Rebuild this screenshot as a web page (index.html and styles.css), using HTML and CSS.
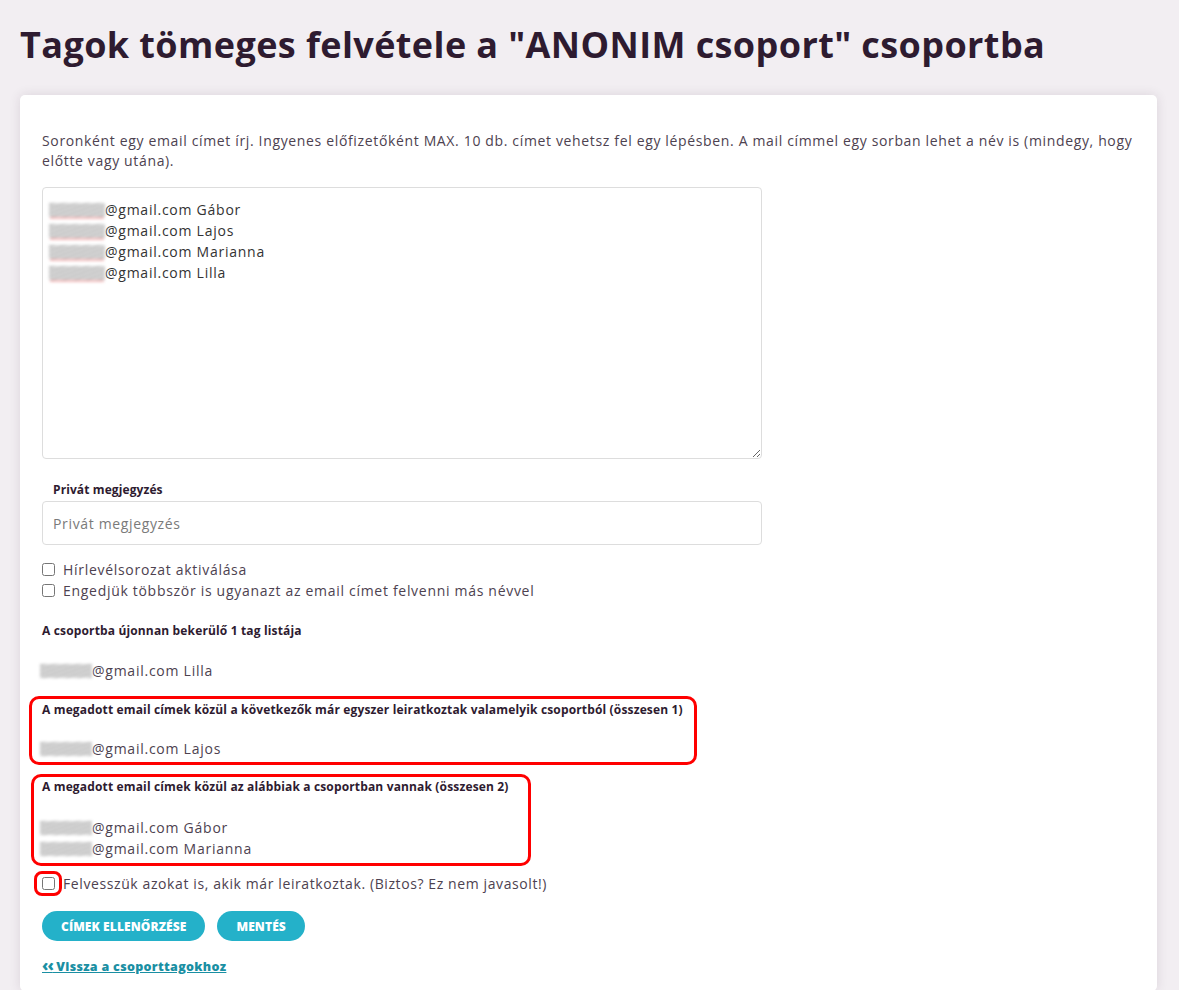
FILE: index.html
```html
<!DOCTYPE html>
<html lang="hu">
<head>
    <meta charset="UTF-8">
    <meta name="viewport" content="width=device-width, initial-scale=1.0">
    <title>Tagok tömeges felvétele</title>
    <link rel="stylesheet" href="styles.css">
</head>
<body>
    <h1>Tagok tömeges felvétele a "ANONIM csoport" csoportba</h1>

    <div class="card">
        <p class="intro">Soronként egy email címet írj. Ingyenes előfizetőként MAX. 10 db. címet vehetsz fel egy lépésben. A mail címmel egy sorban lehet a név is (mindegy, hogy előtte vagy utána).</p>

        <div class="emails">
            <div><span class="blur spell"></span>@gmail.com Gábor</div>
            <div><span class="blur spell"></span>@gmail.com Lajos</div>
            <div><span class="blur spell"></span>@gmail.com Marianna</div>
            <div><span class="blur spell"></span>@gmail.com Lilla</div>
        </div>

        <div class="form-group">
            <label for="note" class="label">Privát megjegyzés</label>
            <input type="text" id="note" class="input-field" placeholder="Privát megjegyzés">
        </div>

        <div class="checks">
            <label class="check"><input type="checkbox"> Hírlevélsorozat aktiválása</label>
            <label class="check"><input type="checkbox"> Engedjük többször is ugyanazt az email címet felvenni más névvel</label>
        </div>

        <h4 class="list-title">A csoportba újonnan bekerülő 1 tag listája</h4>
        <div class="list new-list">
            <div><span class="blur"></span>@gmail.com Lilla</div>
        </div>

        <div class="marked marked-wide">
            <h4 class="list-title">A megadott email címek közül a következők már egyszer leiratkoztak valamelyik csoportból (összesen 1)</h4>
            <div class="list">
                <div><span class="blur"></span>@gmail.com Lajos</div>
            </div>
        </div>

        <div class="marked marked-narrow">
            <h4 class="list-title">A megadott email címek közül az alábbiak a csoportban vannak (összesen 2)</h4>
            <div class="list">
                <div><span class="blur"></span>@gmail.com Gábor</div>
                <div><span class="blur"></span>@gmail.com Marianna</div>
            </div>
        </div>

        <label class="check check-marked"><span class="circle"></span><input type="checkbox">Felvesszük azokat is, akik már leiratkoztak. (Biztos? Ez nem javasolt!)</label>

        <div class="buttons">
            <button>Címek ellenőrzése</button>
            <button>Mentés</button>
        </div>

        <a href="#" class="back"><span class="chev">&lsaquo;&lsaquo;</span> Vissza a csoporttagokhoz</a>
    </div>
</body>
</html>
```

FILE: styles.css
```css
html {
    overflow: hidden;
}
body {
    font-family: "Open Sans", "Noto Sans", sans-serif;
    color: #3d3340;
    background-color: #f2eef2;
    margin: 0;
    padding: 0 22px 0 20px;
}
h1 {
    font-size: 36px;
    line-height: 46px;
    font-weight: 700;
    letter-spacing: 0.4px;
    color: #2e1b30;
    margin: 0;
    padding: 22px 0 27px;
}
.card {
    background-color: #fff;
    border-radius: 5px;
    padding: 36px 22px 15px;
    box-shadow: 0 0 12px rgba(60, 30, 60, 0.12);
}
.intro {
    font-size: 14px;
    line-height: 20px;
    letter-spacing: 0.65px;
    color: #4d4250;
    margin: 0 0 16px;
}
.emails {
    width: 704px;
    height: 254px;
    padding: 11px 8px 5px 6px;
    border: 1px solid #ddd;
    border-radius: 4px;
    font-size: 14px;
    line-height: 21px;
    letter-spacing: 0.75px;
    color: #333;
    overflow: auto;
    resize: vertical;
    margin-bottom: 23px;
}
.blur {
    display: inline-block;
    width: 56px;
    height: 14px;
    vertical-align: -2px;
    background: repeating-linear-gradient(160deg, #d6d6d6 0, #b4b4b4 2px, #e6e6e6 4px);
    filter: blur(1.5px);
    opacity: 0.9;
}
.blur.spell {
    box-shadow: 0 3px 0 -1px #f3b5b5;
}
.new-list .blur, .marked .blur {
    width: 52px;
    margin-left: -2px;
}
.form-group {
    margin-bottom: 14px;
}
.label {
    display: block;
    font-size: 12px;
    line-height: 16px;
    font-weight: 700;
    letter-spacing: 0.1px;
    color: #2e1b30;
    padding-left: 11px;
    margin-bottom: 3px;
}
.input-field {
    width: 720px;
    height: 44px;
    box-sizing: border-box;
    border: 1px solid #ddd;
    border-radius: 4px;
    padding: 0 10px;
    font-family: inherit;
    font-size: 14px;
    letter-spacing: 0.65px;
    color: #333;
}
.input-field::placeholder {
    color: #7a7a7a;
}
.checks {
    margin-bottom: 22px;
}
.check {
    display: flex;
    align-items: center;
    font-size: 14px;
    line-height: 21px;
    letter-spacing: 0.7px;
    color: #4d4250;
}
.check input {
    width: 13px;
    height: 13px;
    margin: 0 8px 0 0;
}
.list-title {
    font-size: 12px;
    line-height: 16px;
    font-weight: 700;
    letter-spacing: 0.15px;
    white-space: nowrap;
    color: #2e1b30;
    margin: 0;
}
.list {
    font-size: 14px;
    line-height: 21px;
    letter-spacing: 0.75px;
    color: #4d4250;
    margin-top: 20px;
}
.new-list {
    margin-top: 21px;
    margin-bottom: 15px;
}
.marked {
    border: 3px solid #f00;
    border-radius: 10px;
    box-sizing: border-box;
    margin-left: -13px;
    padding: 3px 10px 3px 10px;
}
.marked-wide {
    width: 668px;
    margin-bottom: 9px;
}
.marked-narrow {
    width: 500px;
    margin-left: -11px;
    padding: 2px 8px 4px;
}
.marked-narrow .list {
    margin-top: 22px;
}
.check-marked {
    position: relative;
    margin-top: 7px;
    letter-spacing: 0.6px;
}
.check-marked input {
    margin-right: 8px;
}
.circle {
    position: absolute;
    left: -8px;
    top: -2px;
    width: 28px;
    height: 25px;
    box-sizing: border-box;
    border: 3px solid #f00;
    border-radius: 8px;
}
.buttons {
    display: flex;
    gap: 12px;
    margin-top: 17px;
}
button {
    height: 30px;
    padding: 0 19px;
    border: none;
    border-radius: 15px;
    background-color: #24b1c9;
    color: #fff;
    font-family: inherit;
    font-size: 12px;
    font-weight: 800;
    letter-spacing: 0.1px;
    text-transform: uppercase;
    cursor: pointer;
}
.back {
    display: inline-block;
    margin-top: 16px;
    font-size: 12.5px;
    line-height: 16px;
    font-weight: 800;
    letter-spacing: 0.3px;
    color: #1a8fa3;
}
.chev {
    font-size: 16px;
    letter-spacing: -1px;
}
```
